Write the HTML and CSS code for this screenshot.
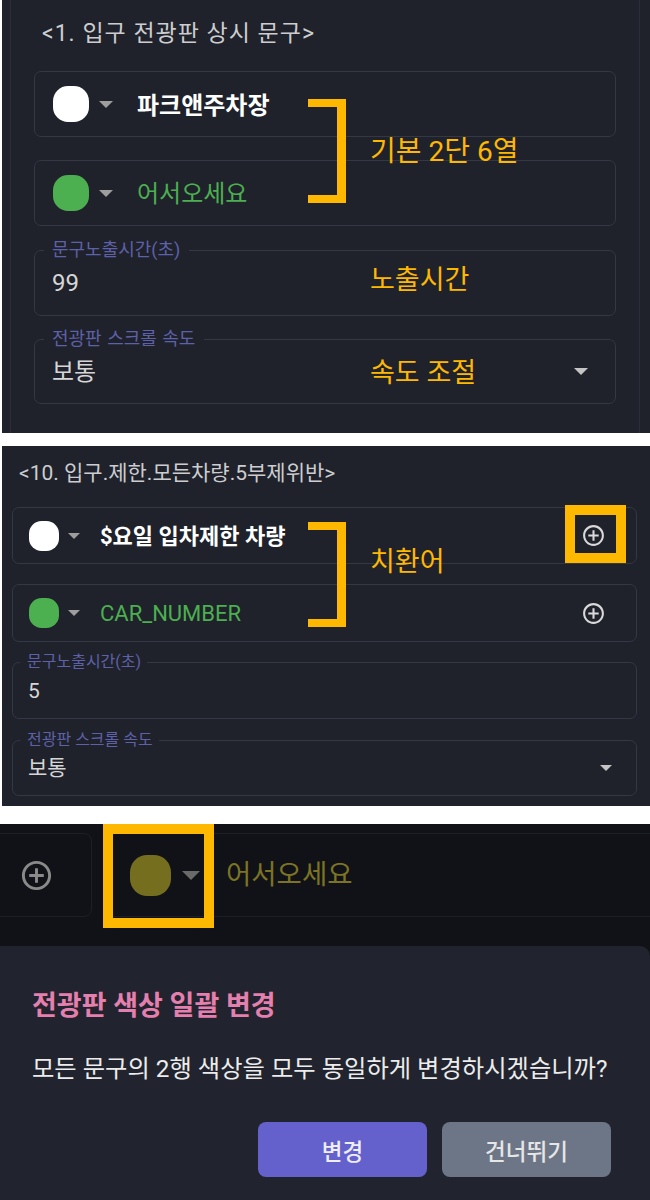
FILE: index.html
```html
<!DOCTYPE html>
<html lang="ko">
<head>
<meta charset="utf-8">
<title>전광판 문구 설정</title>
<link rel="stylesheet" href="styles.css">
</head>
<body>
<section class="shot shot1">
  <div class="card1">
    <div class="title t1">&lt;1. 입구 전광판 상시 문구&gt;</div>
    <div class="row r1 first">
      <span class="dot d1 white"></span>
      <svg class="caret k1" viewBox="0 0 14 7"><polygon points="0,0 14,0 7,7"/></svg>
      <span class="ltext l1 strong">파크앤주차장</span>
    </div>
    <div class="row r1 second">
      <span class="dot d1 green"></span>
      <svg class="caret k1" viewBox="0 0 14 7"><polygon points="0,0 14,0 7,7"/></svg>
      <span class="ltext l1 greentext">어서오세요</span>
    </div>
    <div class="field f1 time">
      <span class="flabel fl1">문구노출시간(초)</span>
      <span class="fvalue v1">99</span>
    </div>
    <div class="field f1 speed">
      <span class="flabel fl1">전광판 스크롤 속도</span>
      <span class="fvalue v1">보통</span>
      <svg class="caret sk1" viewBox="0 0 14 7"><polygon points="0,0 14,0 7,7"/></svg>
    </div>
  </div>
  <div class="bracket b1"></div>
  <div class="note n1a">기본 2단 6열</div>
  <div class="note n1b">노출시간</div>
  <div class="note n1c">속도 조절</div>
</section>

<section class="shot shot2">
  <div class="title t2">&lt;10. 입구.제한.모든차량.5부제위반&gt;</div>
  <div class="row r2 first">
    <span class="dot d2 white"></span>
    <svg class="caret k2" viewBox="0 0 14 7"><polygon points="0,0 14,0 7,7"/></svg>
    <span class="ltext l2 strong">$요일 입차제한 차량</span>
    <svg class="plus p2" viewBox="0 0 24 24"><path d="M13 7h-2v4H7v2h4v4h2v-4h4v-2h-4V7zm-1-5C6.480 2 2 6.480 2 12s4.480 10 10 10 10-4.480 10-10S17.520 2 12 2zm0 18c-4.410 0-8-3.590-8-8s3.590-8 8-8 8 3.590 8 8-3.590 8-8 8z"/></svg>
  </div>
  <div class="row r2 second">
    <span class="dot d2 green"></span>
    <svg class="caret k2" viewBox="0 0 14 7"><polygon points="0,0 14,0 7,7"/></svg>
    <span class="ltext l2 greentext">CAR_NUMBER</span>
    <svg class="plus p2" viewBox="0 0 24 24"><path d="M13 7h-2v4H7v2h4v4h2v-4h4v-2h-4V7zm-1-5C6.480 2 2 6.480 2 12s4.480 10 10 10 10-4.480 10-10S17.520 2 12 2zm0 18c-4.410 0-8-3.590-8-8s3.590-8 8-8 8 3.590 8 8-3.590 8-8 8z"/></svg>
  </div>
  <div class="field f2 time">
    <span class="flabel fl2">문구노출시간(초)</span>
    <span class="fvalue v2">5</span>
  </div>
  <div class="field f2 speed">
    <span class="flabel fl2">전광판 스크롤 속도</span>
    <span class="fvalue v2">보통</span>
    <svg class="caret sk2" viewBox="0 0 14 7"><polygon points="0,0 14,0 7,7"/></svg>
  </div>
  <div class="bracket b2"></div>
  <div class="note n2a">치환어</div>
  <div class="hilite h2"></div>
</section>

<section class="shot shot3">
  <div class="dim">
    <div class="dimrow">
      <div class="dbox dbox1">
        <svg class="plus p3" viewBox="0 0 24 24"><path d="M13 7h-2v4H7v2h4v4h2v-4h4v-2h-4V7zm-1-5C6.480 2 2 6.480 2 12s4.480 10 10 10 10-4.480 10-10S17.520 2 12 2zm0 18c-4.410 0-8-3.590-8-8s3.590-8 8-8 8 3.590 8 8-3.590 8-8 8z"/></svg>
      </div>
      <div class="dbox dbox2">
        <span class="dot d3"></span>
        <svg class="caret k3" viewBox="0 0 14 7"><polygon points="0,0 14,0 7,7"/></svg>
        <span class="ltext l3">어서오세요</span>
      </div>
    </div>
    <div class="hilite h3"></div>
  </div>
  <div class="modal">
    <div class="mtitle">전광판 색상 일괄 변경</div>
    <div class="mbody">모든 문구의 2행 색상을 모두 동일하게 변경하시겠습니까?</div>
    <div class="mactions">
      <button class="btn primary">변경</button>
      <button class="btn secondary">건너뛰기</button>
    </div>
  </div>
</section>
</body>
</html>
```

FILE: styles.css
```css
* { box-sizing: border-box; }
html, body { margin: 0; padding: 0; }
body {
  background: #ffffff;
  width: 650px;
  font-family: Roboto, "Noto Sans CJK KR", sans-serif;
}

.shot { position: relative; background: #1f222b; overflow: hidden; }

/* ---------- shot 1 ---------- */
.shot1 { margin-left: 2px; height: 433px; }
.card1 {
  margin-left: 8px;
  width: 630px;
  height: 100%;
  border-left: 1px solid #2b2e39;
  border-right: 1px solid #2b2e39;
  padding: 19px 23px 0;
}
.title { color: #cdcdd0; white-space: nowrap; }
.t1 { font-size: 23px; line-height: 30px; padding-left: 8px; letter-spacing: 1px; }

.row { display: flex; align-items: center; border: 1px solid #343744; }
.r1 { height: 66px; border-radius: 7px; padding-left: 18px; }
.r1.first { margin-top: 22px; }
.r1.second { margin-top: 23px; }

.dot { flex: none; display: block; border-radius: 42%; }
.white { background: #ffffff; }
.green { background: #4caf50; }
.d1 { width: 36px; height: 36px; }

.caret { flex: none; display: block; fill: #9e9e9e; }
.k1 { width: 14px; height: 7px; margin-left: 10px; }

.ltext { white-space: nowrap; }
.strong { color: #ffffff; font-weight: 700; }
.greentext { color: #4caf50; }
.l1 { font-size: 24px; line-height: 30px; margin-left: 24px; padding-top: 4px; }
.greentext.l1 { padding-top: 2px; }

.field {
  position: relative;
  display: flex;
  align-items: center;
  border: 1px solid #343744;
}
.flabel {
  position: absolute;
  background: #1f222b;
  color: #5e60a8;
  white-space: nowrap;
}
.fvalue { color: #d6d6d6; flex: 1; }

.f1 { border-radius: 7px; padding: 0 27px 0 17px; }
.f1.time { margin-top: 24px; height: 66px; }
.f1.speed { margin-top: 23px; height: 65px; }
.fl1 { left: 9px; top: -12px; font-size: 18px; line-height: 22px; padding: 0 9px 0 8px; word-spacing: 1px; }
.v1 { font-size: 24px; line-height: 30px; }
.sk1 { width: 14px; height: 7px; fill: #c4c4c4; }

/* annotations */
.bracket {
  position: absolute;
  border: 8px solid #ffb800;
  border-left: none;
}
.note {
  position: absolute;
  color: #ffb800;
  font-size: 27px;
  line-height: 32px;
  white-space: nowrap;
}
.b1 { left: 306px; top: 99px; width: 38px; height: 104px; border-width: 8px 9px 8px 0; }
.n1a { left: 368px; top: 136px; font-size: 28px; }
.n1b { left: 368px; top: 264px; }
.n1c { left: 368px; top: 357px; }

.hilite {
  position: absolute;
  border: 10px solid #ffb800;
}

/* ---------- shot 2 ---------- */
.shot2 { margin: 13px 0 0 2px; height: 360px; padding: 13px 13px 0 10px; }
.t2 { font-size: 21px; line-height: 28px; padding-left: 7px; }

.r2 { height: 57px; border-radius: 7px; padding: 0 30px 0 16px; }
.r2.first { margin-top: 20px; }
.r2.second { margin-top: 20px; height: 58px; }
.d2 { width: 30px; height: 30px; }
.k2 { width: 12px; height: 6px; margin-left: 9px; }
.l2 { font-size: 22px; line-height: 28px; margin-left: 20px; flex: 1; padding-top: 3px; }
.greentext.l2 { padding-top: 2px; }
.plus { flex: none; display: block; fill: #d9d9d9; }
.p2 { width: 25px; height: 25px; }

.f2 { border-radius: 7px; padding: 0 24px 0 15px; }
.f2.time { margin-top: 20px; height: 57px; }
.f2.speed { margin-top: 21px; height: 56px; }
.fl2 { left: 7px; top: -11px; font-size: 16px; line-height: 20px; padding: 0 6px 0 7px; }
.v2 { font-size: 21px; line-height: 28px; }
.sk2 { width: 12px; height: 6px; fill: #c4c4c4; }

.b2 { left: 306px; top: 76px; width: 38px; height: 105px; border-width: 8px 9px 8px 0; }
.n2a { left: 368px; top: 100px; }
.h2 { left: 563px; top: 59px; width: 61px; height: 58px; }

/* ---------- shot 3 ---------- */
.shot3 { margin-top: 18px; height: 376px; background: #101217; }
.dim { position: relative; height: 122px; padding-top: 9px; }
.dimrow { display: flex; height: 84px; gap: 12px; }
.dbox {
  display: flex;
  align-items: center;
  border: 1px solid #1d1f26;
  border-radius: 8px;
}
.dbox1 { flex: none; margin-left: -20px; width: 112px; justify-content: center; }
.dbox2 { flex: 1; margin-right: -20px; padding-left: 25px; }
.p3 { width: 35px; height: 35px; fill: #8a8a8a; }
.d3 { width: 41px; height: 41px; background: #766e1f; }
.k3 { width: 18px; height: 9px; margin-left: 11px; fill: #6a6a6a; }
.l3 { font-size: 27.5px; line-height: 34px; margin-left: 26px; color: #7c7424; }
.h3 { left: 103px; top: 0; width: 111px; height: 104px; }

.modal {
  height: 254px;
  background: #21242e;
  border-top-right-radius: 10px;
  padding: 41px 39px 0 32px;
}
.mtitle { font-size: 27px; line-height: 38px; font-weight: 700; color: #e57fae; white-space: nowrap; }
.mbody { margin-top: 27px; font-size: 24.3px; line-height: 34px; color: #ececec; white-space: nowrap; }
.mactions { display: flex; justify-content: flex-end; gap: 15px; margin-top: 36px; }
.btn {
  width: 169px;
  height: 55px;
  border: none;
  border-radius: 8px;
  font-family: inherit;
  font-size: 22.5px;
  font-weight: 500;
  color: #eeeef4;
  padding: 0;
}
.primary { background: #6461cc; }
.secondary { background: #6c7686; color: #e6e6e6; }
```
